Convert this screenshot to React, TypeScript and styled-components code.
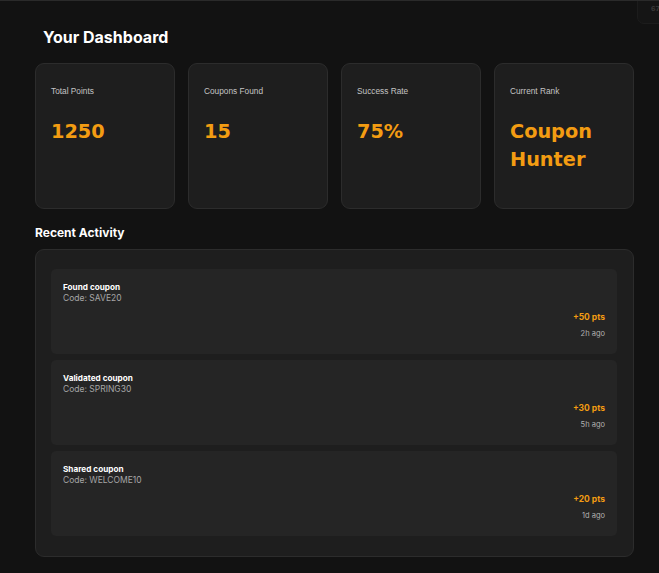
import React from "react";
import styled, { createGlobalStyle } from "styled-components";

const GlobalStyle = createGlobalStyle`
  html, body {
    margin: 0;
    padding: 0;
    background: #121212;
  }
  body {
    font-family: Inter, "Liberation Sans", Arial, sans-serif;
    color: #ffffff;
  }
  * { box-sizing: border-box; }
`;

const Page = styled.div`
  position: relative;
  min-height: 573px;
  border-top: 1px solid #2a2a2a;
  padding: 26px 25px 16px 35px;
  overflow: hidden;
`;

const ZoomBadge = styled.div`
  position: absolute;
  top: -8px;
  right: -16px;
  width: 38px;
  height: 31px;
  border: 1px solid #1c1c1c;
  border-radius: 7px;
  background: #151515;
  color: #3a3a3a;
  font-family: "Liberation Sans", Arial, sans-serif;
  font-size: 8px;
  font-weight: 700;
  padding: 10px 0 0 13px;
`;

const Title = styled.h1`
  margin: 0 0 16px;
  padding-left: 8px;
  font-family: Inter, sans-serif;
  font-size: 16px;
  font-weight: 700;
  line-height: 20px;
  color: #ffffff;
`;

const StatsGrid = styled.div`
  display: grid;
  grid-template-columns: repeat(4, 1fr);
  gap: 13px;
`;

const StatCard = styled.div`
  background: #1e1e1e;
  border: 1px solid #2c2c2c;
  border-radius: 9px;
  padding: 22px 15px 34px;
  min-height: 146px;
`;

const StatLabel = styled.div`
  font-family: "Liberation Sans", Arial, sans-serif;
  font-size: 8.3px;
  line-height: 10px;
  color: #c4c4c4;
  margin-bottom: 22px;
`;

const StatValue = styled.div`
  font-family: "DejaVu Sans", sans-serif;
  font-size: 19.3px;
  font-weight: 700;
  line-height: 28px;
  color: #f39c12;
`;

const SectionTitle = styled.h2`
  margin: 16px 0 9px;
  font-family: Inter, sans-serif;
  font-size: 12px;
  font-weight: 700;
  line-height: 15px;
  color: #ffffff;
`;

const ActivityPanel = styled.div`
  background: #1e1e1e;
  border: 1px solid #2c2c2c;
  border-radius: 9px;
  padding: 19px 16px 20px 15px;
  display: flex;
  flex-direction: column;
  gap: 6px;
`;

const ActivityItem = styled.div`
  background: #252525;
  border-radius: 5px;
  padding: 13px 12px 0;
  height: 85px;
  display: flex;
  flex-direction: column;
`;

const ActivityTitle = styled.div`
  font-size: 8.2px;
  font-weight: 700;
  line-height: 11px;
  color: #ffffff;
`;

const ActivityCode = styled.div`
  font-size: 8.5px;
  line-height: 11px;
  color: #a6a6a6;
`;

const ActivityMeta = styled.div`
  margin-top: 8px;
  display: flex;
  flex-direction: column;
  align-items: flex-end;
  gap: 6px;
`;

const Points = styled.div`
  font-size: 8.5px;
  font-weight: 700;
  line-height: 11px;
  color: #f39c12;
`;

const Time = styled.div`
  font-size: 7.5px;
  line-height: 10px;
  color: #b0b0b0;
`;

const stats = [
  { label: "Total Points", value: "1250" },
  { label: "Coupons Found", value: "15" },
  { label: "Success Rate", value: "75%" },
  { label: "Current Rank", value: "Coupon Hunter" },
];

const activities = [
  { title: "Found coupon", code: "SAVE20", points: "+50 pts", time: "2h ago" },
  { title: "Validated coupon", code: "SPRING30", points: "+30 pts", time: "5h ago" },
  { title: "Shared coupon", code: "WELCOME10", points: "+20 pts", time: "1d ago" },
];

export default function App() {
  return (
    <>
      <GlobalStyle />
      <Page>
        <ZoomBadge>67</ZoomBadge>
        <Title>Your Dashboard</Title>
        <StatsGrid>
          {stats.map((s) => (
            <StatCard key={s.label}>
              <StatLabel>{s.label}</StatLabel>
              <StatValue>{s.value}</StatValue>
            </StatCard>
          ))}
        </StatsGrid>
        <SectionTitle>Recent Activity</SectionTitle>
        <ActivityPanel>
          {activities.map((a) => (
            <ActivityItem key={a.title}>
              <ActivityTitle>{a.title}</ActivityTitle>
              <ActivityCode>Code: {a.code}</ActivityCode>
              <ActivityMeta>
                <Points>{a.points}</Points>
                <Time>{a.time}</Time>
              </ActivityMeta>
            </ActivityItem>
          ))}
        </ActivityPanel>
      </Page>
    </>
  );
}
